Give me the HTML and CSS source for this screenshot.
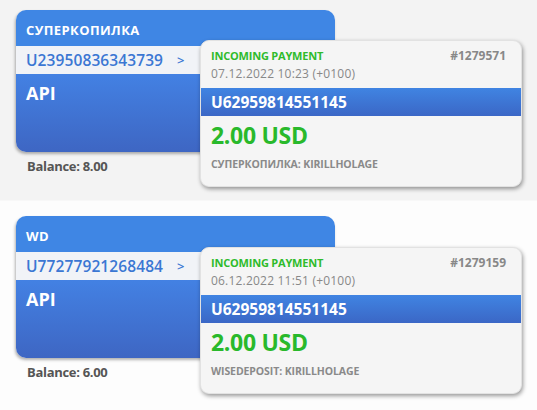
FILE: index.html
```html
<!DOCTYPE html>
<html>
<head>
<meta charset="utf-8">
<link rel="stylesheet" href="styles.css">
</head>
<body>
<section class="panel panel-gray">
  <div class="wallet">
    <div class="card">
      <div class="card-head">СУПЕРКОПИЛКА</div>
      <div class="card-acct"><span class="acct">U23950836343739</span><span class="arrow">&gt;</span></div>
      <div class="card-body">API</div>
    </div>
    <div class="balance">Balance: 8.00</div>
    <div class="popup">
      <div class="pop-top">
        <span class="pop-title">INCOMING PAYMENT</span>
        <span class="pop-id">#1279571</span>
      </div>
      <div class="pop-date">07.12.2022 10:23 (+0100)</div>
      <div class="pop-bar">U62959814551145</div>
      <div class="pop-amount">2.00 USD</div>
      <div class="pop-note">СУПЕРКОПИЛКА: KIRILLHOLAGE</div>
    </div>
  </div>
</section>
<section class="panel panel-white">
  <div class="wallet">
    <div class="card">
      <div class="card-head">WD</div>
      <div class="card-acct"><span class="acct">U77277921268484</span><span class="arrow">&gt;</span></div>
      <div class="card-body">API</div>
    </div>
    <div class="balance">Balance: 6.00</div>
    <div class="popup popup-low">
      <div class="pop-top">
        <span class="pop-title">INCOMING PAYMENT</span>
        <span class="pop-id">#1279159</span>
      </div>
      <div class="pop-date">06.12.2022 11:51 (+0100)</div>
      <div class="pop-bar">U62959814551145</div>
      <div class="pop-amount">2.00 USD</div>
      <div class="pop-note">WISEDEPOSIT: KIRILLHOLAGE</div>
    </div>
  </div>
</section>
</body>
</html>
```
FILE: styles.css
```css
* { box-sizing: border-box; }
html, body { margin: 0; padding: 0; }
body {
  width: 537px;
  height: 410px;
  overflow: hidden;
  background: #fdfdfd;
  font-family: "Open Sans", "Noto Sans", sans-serif;
}
.panel {
  padding-left: 16px;
}
.panel-gray {
  background: #f3f3f3;
  height: 201px;
  padding-top: 10px;
  border-bottom: 1px solid #f8f8f8;
}
.panel-white {
  background: #fdfdfd;
  padding-top: 15px;
  height: 208px;
}
.wallet {
  position: relative;
  width: 506px;
}
.card {
  width: 319px;
  border-radius: 10px;
  overflow: hidden;
  box-shadow: -1px 2px 3px rgba(0,0,0,0.3);
}
.card-head {
  height: 36px;
  background: #3f86e4;
  color: #fff;
  font-weight: 700;
  font-size: 13px;
  line-height: 40px;
  padding-left: 10px;
  letter-spacing: 0.4px;
}
.card-acct {
  height: 28px;
  background: #f1f3f7;
  display: flex;
  align-items: center;
  padding-left: 10px;
  color: #3b77d3;
  font-size: 15.5px;
  font-weight: 600;
  letter-spacing: 0.1px;
}
.arrow {
  margin-left: 14px;
  font-size: 13px;
}
.card-body {
  height: 78px;
  background: linear-gradient(#4381e3, #3e66c3);
  color: #fff;
  font-weight: 700;
  font-size: 18px;
  padding: 6px 0 0 10px;
  line-height: 26px;
}
.balance {
  height: 26px;
  line-height: 28px;
  padding-left: 11px;
  font-size: 13px;
  font-weight: 700;
  color: #555;
  letter-spacing: -0.3px;
}
.popup {
  position: absolute;
  left: 184px;
  top: 30px;
  width: 322px;
  height: 147px;
  background: #f5f5f5;
  border-radius: 9px;
  box-shadow: 1px 2px 4px rgba(0,0,0,0.4);
  overflow: hidden;
  border: 1px solid #e2e2e2;
}
.popup-low { top: 31px; }
.pop-top {
  display: flex;
  justify-content: space-between;
  padding: 7px 15px 0 10px;
  height: 24px;
  line-height: 16px;
}
.pop-title {
  color: #2fbb2c;
  font-weight: 700;
  font-size: 11px;
  letter-spacing: -0.2px;
}
.pop-id {
  color: #888;
  font-weight: 700;
  font-size: 12px;
}
.pop-date {
  height: 23px;
  line-height: 18px;
  padding-left: 10px;
  font-size: 12px;
  color: #888;
  letter-spacing: 0.2px;
}
.pop-bar {
  height: 28px;
  background: linear-gradient(#4084e2, #3b67c6);
  color: #fff;
  font-weight: 700;
  font-size: 15.5px;
  line-height: 28px;
  padding-left: 10px;
}
.pop-amount {
  height: 36px;
  line-height: 38px;
  padding-left: 10px;
  color: #29b92b;
  font-weight: 700;
  font-size: 23px;
  letter-spacing: -0.3px;
}
.pop-note {
  padding-left: 10px;
  height: 24px;
  line-height: 24px;
  font-size: 10.5px;
  font-weight: 700;
  color: #8a8a8a;
  letter-spacing: -0.1px;
}
```
